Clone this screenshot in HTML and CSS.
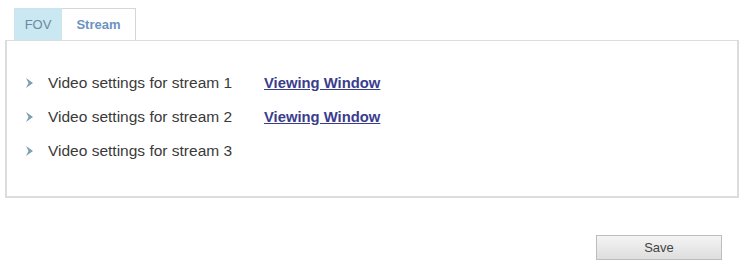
FILE: index.html
```html
<!DOCTYPE html>
<html>
<head>
<meta charset="utf-8">
<link rel="stylesheet" href="styles.css">
</head>
<body>
<div class="page">
  <div class="tabs">
    <div class="tab tab-active">FOV</div>
    <div class="tab tab-stream">Stream</div>
  </div>
  <div class="panel">
    <div class="row">
      <svg class="arrow" width="7" height="10" viewBox="0 0 7 10"><path d="M0 0 L7 5 L0 10 L2.5 5 Z" fill="#7f9fb2"/></svg>
      <span class="label">Video settings for stream 1</span>
      <a class="link" href="#">Viewing Window</a>
    </div>
    <div class="row">
      <svg class="arrow" width="7" height="10" viewBox="0 0 7 10"><path d="M0 0 L7 5 L0 10 L2.5 5 Z" fill="#7f9fb2"/></svg>
      <span class="label">Video settings for stream 2</span>
      <a class="link" href="#">Viewing Window</a>
    </div>
    <div class="row">
      <svg class="arrow" width="7" height="10" viewBox="0 0 7 10"><path d="M0 0 L7 5 L0 10 L2.5 5 Z" fill="#7f9fb2"/></svg>
      <span class="label">Video settings for stream 3</span>
    </div>
  </div>
  <div class="actions">
    <button class="save">Save</button>
  </div>
</div>
</body>
</html>
```
FILE: styles.css
```css
html, body {
  margin: 0;
  padding: 0;
  background: #ffffff;
}
body {
  font-family: "Liberation Sans", Arial, sans-serif;
  font-size: 15px;
  color: #3a3a3a;
}
.page {
  width: 734px;
  padding: 8px 3px 0 5px;
}
.tabs {
  display: flex;
  padding-left: 9px;
  height: 32px;
}
.tab {
  box-sizing: border-box;
  height: 32px;
  display: flex;
  align-items: center;
  justify-content: center;
  font-size: 13px;
  border: 1px solid #d6d6d6;
  border-bottom: none;
}
.tab-active {
  width: 48px;
  background: #c9e8f1;
  color: #6a8aa2;
  border-color: #cfe3ea;
}
.tab-stream {
  width: 74px;
  background: #ffffff;
  color: #6b93c0;
  font-weight: bold;
  border-left: none;
}
.panel {
  box-sizing: border-box;
  height: 158px;
  border: 2px solid #dcdcdc;
  border-top-width: 1px;
  padding: 33px 0 0 19px;
  display: flex;
  flex-direction: column;
  gap: 17px;
}
.row {
  display: flex;
  align-items: center;
  height: 17px;
}
.arrow {
  display: block;
  margin-right: 15px;
  margin-left: 0;
}
.label {
  width: 216px;
  font-size: 15.5px;
  color: #3a3a3a;
}
.link {
  color: #3a3d8c;
  font-weight: bold;
  font-size: 14.8px;
  text-decoration: underline;
}
.actions {
  display: flex;
  justify-content: flex-end;
  padding: 37px 17px 0 0;
}
.save {
  width: 126px;
  height: 25px;
  font-family: "Liberation Sans", Arial, sans-serif;
  font-size: 13px;
  color: #444;
  border: 1px solid #bdbdbd;
  background: linear-gradient(#f4f4f4, #dedede);
  padding: 0;
}
```
